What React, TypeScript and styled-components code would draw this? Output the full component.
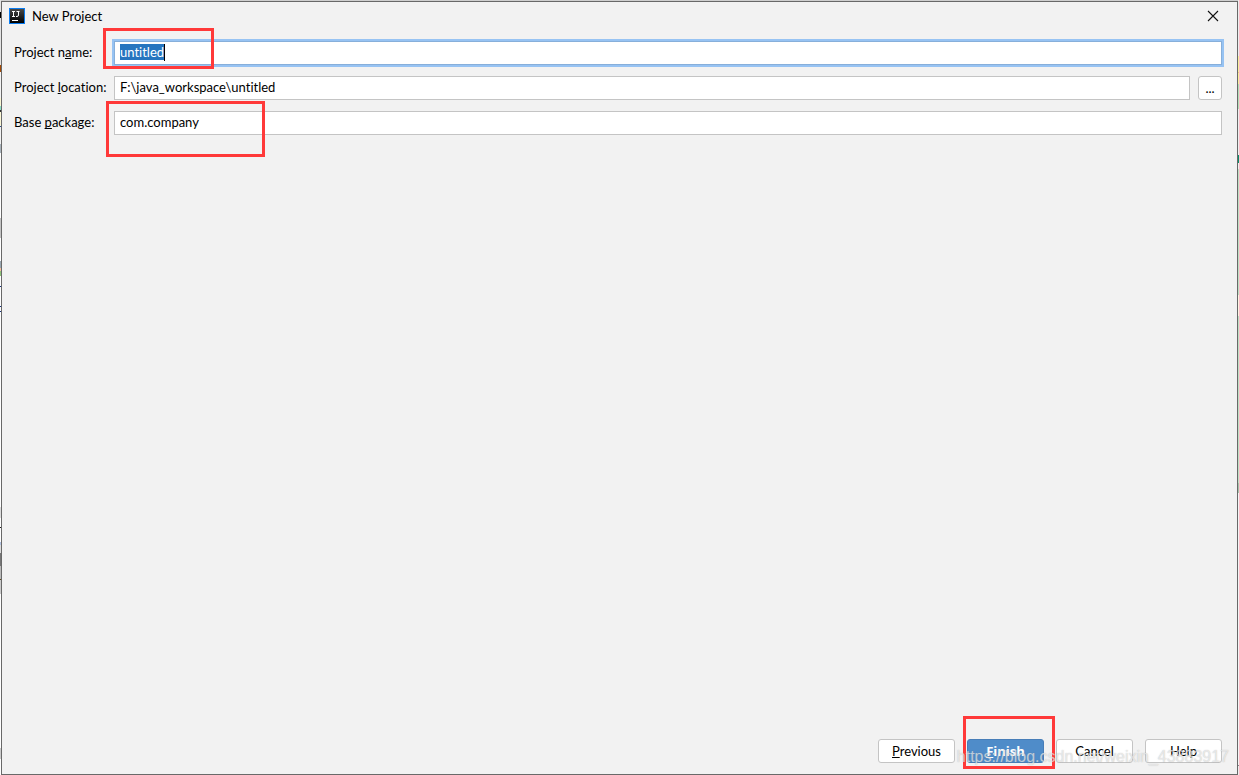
import React, { useEffect, useRef } from "react";
import styled, { createGlobalStyle, css } from "styled-components";

const GlobalStyle = createGlobalStyle`
  * { box-sizing: border-box; }
  body {
    margin: 0;
    font-family: Lato, "Open Sans", sans-serif;
    font-size: 13px;
    line-height: 18px;
    font-variant-ligatures: none;
    text-decoration-skip-ink: none;
    color: #000;
  }
`;

const leftEdge = `linear-gradient(#e4e4e4 0 12px, #000 12px 18px, #e4e4e4 18px 65px, #a34a05 65px 72px,
  #f4f4f4 72px 98px, #fbf7d5 98px 106px, #8fe0c8 106px 110px, #333 110px 112px, #fbf7d5 112px 126px,
  #2c4f96 126px 127px, #f4f4f4 127px 144px, #aab4bc 144px 153px, #fff 153px 218px, #c4c4c4 218px 238px,
  #fff 238px 261px, #9aa8b2 261px 268px, #f4c0a0 268px 271px, #8fc47a 271px 276px, #fff 276px 286px,
  #16327c 286px 287px, #fff 287px 306px, #16327c 306px 307px, #fff 307px 311px, #16327c 311px 312px,
  #fff 312px 507px, #ddd 507px 518px, #fff 518px 527px, #222 527px 528px, #fff 528px 542px,
  #b4c4e4 542px 545px, #ddd 545px 553px, #777 553px 566px, #bbb 566px 579px, #5c4a20 579px 580px,
  #ccc 580px 594px, #fff 594px 748px, #ccc 748px 759px, #fff 759px)`;

const rightEdge = `linear-gradient(#eee 0 56px, #f7ee9c 56px 72px, #f4c08a 72px 73px, #f7ee9c 73px 84px,
  #b4e0b8 84px 109px, #eee 109px 155px, #0a8f6a 155px 163px, #eee 163px 169px, #bfe0c4 169px 295px,
  #fdf3e2 295px 316px, #bfe0c4 316px 483px, #a8c4ac 483px 493px, #f4f4f4 493px 765px, #888 765px 766px, #eee 766px)`;

const Desktop = styled.div`
  display: flex;
  min-height: 100vh;
  padding: 1px 1px 0;
  background: ${leftEdge} left / 1px 100% no-repeat, ${rightEdge} right / 1px 100% no-repeat, #cfcfcf;
`;

const Dialog = styled.main`
  flex: 1;
  display: flex;
  flex-direction: column;
  position: relative;
  border: 1px solid #696969;
  background: #f2f2f2;
`;

const TitleBar = styled.header`
  display: flex;
  align-items: center;
  gap: 7px;
  height: 28px;
  padding: 0 18px 0 7px;
`;

const Title = styled.h1`
  flex: 1;
  margin: 0;
  font-size: 13px;
  font-weight: 400;
`;

const CloseButton = styled.button`
  display: flex;
  padding: 0;
  border: 0;
  background: none;
`;

const Form = styled.form`
  flex: 1;
  display: flex;
  flex-direction: column;
  padding: 11px 15px 11px 12px;
`;

const Fields = styled.div`
  flex: 1;
  display: flex;
  flex-direction: column;
  gap: 11px;
`;

const Row = styled.div`
  display: flex;
  align-items: center;
`;

const Label = styled.label`
  width: 100px;
  padding-bottom: 2px;
`;

const FieldBox = styled.div`
  position: relative;
  flex: 1;
  display: flex;
`;

const TextField = styled.input`
  flex: 1;
  min-width: 0;
  height: 24px;
  padding: 0 5px 2px;
  border: 1px solid #c4c4c4;
  background: #fff;
  color: #000;
  font: inherit;
  font-variant-ligatures: none;
  outline: none;

  &:focus {
    border-color: #87afda;
    box-shadow: 0 0 0 2px #97c3f3;
  }
  &::selection {
    background: #2675bf;
    color: #fff;
  }
`;

const Caret = styled.span`
  position: absolute;
  top: 3px;
  left: 50px;
  width: 1px;
  height: 17px;
  background: #000;
  pointer-events: none;
`;

const Button = styled.button<{ $primary?: boolean; $small?: boolean }>`
  width: ${(p) => (p.$small ? 24 : 77)}px;
  height: 24px;
  padding: 0;
  border: 1px solid #c4c4c4;
  border-radius: 3px;
  background: #fff;
  color: #000;
  font: inherit;
  ${(p) => p.$small && css`margin-left: 8px;`}
  ${(p) =>
    p.$primary &&
    css`
      border-color: #487eb8;
      background: #4f8cc9;
      color: #fff;
      font-family: "Open Sans", sans-serif;
      font-weight: 700;
    `}
`;

const Footer = styled.footer`
  display: flex;
  justify-content: flex-end;
  gap: 12px;
`;

const ButtonSlot = styled.div`
  position: relative;
  display: flex;
`;

const Highlight = styled.span<{ $top: number; $left: number; $width: number; $height: number }>`
  position: absolute;
  top: ${(p) => p.$top}px;
  left: ${(p) => p.$left}px;
  width: ${(p) => p.$width}px;
  height: ${(p) => p.$height}px;
  border: 3px solid #ff3939;
  pointer-events: none;
`;

const Watermark = styled.span`
  position: absolute;
  right: 8px;
  bottom: 8px;
  font-family: "Liberation Sans", Arial, sans-serif;
  font-size: 16px;
  color: rgba(255, 255, 255, 0.6);
  text-shadow: 0 0 1px rgba(120, 120, 120, 0.5);
  pointer-events: none;
`;

const AppIcon = () => (
  <svg width="16" height="16" viewBox="0 0 16 16" aria-hidden="true">
    <defs>
      <linearGradient id="face" x1="0" y1="0" x2="0" y2="1">
        <stop offset="0" stopColor="#484848" />
        <stop offset="1" stopColor="#000" />
      </linearGradient>
    </defs>
    <rect width="16" height="16" fill="#0a7cf0" />
    <rect x="1" y="1" width="14" height="14" fill="url(#face)" />
    <path d="M3 3.500h3M4.500 3v5M3 8.500h3M7.500 3.500h3M9.500 3v4q0 1.500-1.500 1.500H7M3 12.500h6" stroke="#fff" fill="none" />
  </svg>
);

export default function App() {
  const nameRef = useRef<HTMLInputElement>(null);

  useEffect(() => {
    nameRef.current?.focus();
    nameRef.current?.select();
  }, []);

  return (
    <>
      <GlobalStyle />
      <Desktop>
        <Dialog>
          <TitleBar>
            <AppIcon />
            <Title>New Project</Title>
            <CloseButton type="button" aria-label="Close">
              <svg width="12" height="12" viewBox="0 0 12 12">
                <path d="M1 1l10 10M11 1L1 11" stroke="#111" strokeWidth="1.100" />
              </svg>
            </CloseButton>
          </TitleBar>
          <Form onSubmit={(e) => e.preventDefault()}>
            <Fields>
              <Row>
                <Label htmlFor="name">Project n<u>a</u>me:</Label>
                <FieldBox>
                  <TextField id="name" ref={nameRef} defaultValue="untitled" />
                  <Caret />
                  <Highlight $top={-13} $left={-11} $width={111} $height={41} />
                </FieldBox>
              </Row>
              <Row>
                <Label htmlFor="location">Project <u>l</u>ocation:</Label>
                <TextField id="location" defaultValue={"F:\\java_workspace\\untitled"} />
                <Button type="button" $small aria-label="Browse">...</Button>
              </Row>
              <Row>
                <Label htmlFor="package">Base <u>p</u>ackage:</Label>
                <FieldBox>
                  <TextField id="package" defaultValue="com.company" />
                  <Highlight $top={-10} $left={-8} $width={159} $height={56} />
                </FieldBox>
              </Row>
            </Fields>
            <Footer>
              <Button type="button"><u>P</u>revious</Button>
              <ButtonSlot>
                <Button type="submit" $primary><u>F</u>inish</Button>
                <Highlight $top={-23} $left={-4} $width={92} $height={53} />
              </ButtonSlot>
              <Button type="button">Cancel</Button>
              <Button type="button">Help</Button>
            </Footer>
          </Form>
          <Watermark>https://blog.csdn.net/weixin_43883917</Watermark>
        </Dialog>
      </Desktop>
    </>
  );
}
